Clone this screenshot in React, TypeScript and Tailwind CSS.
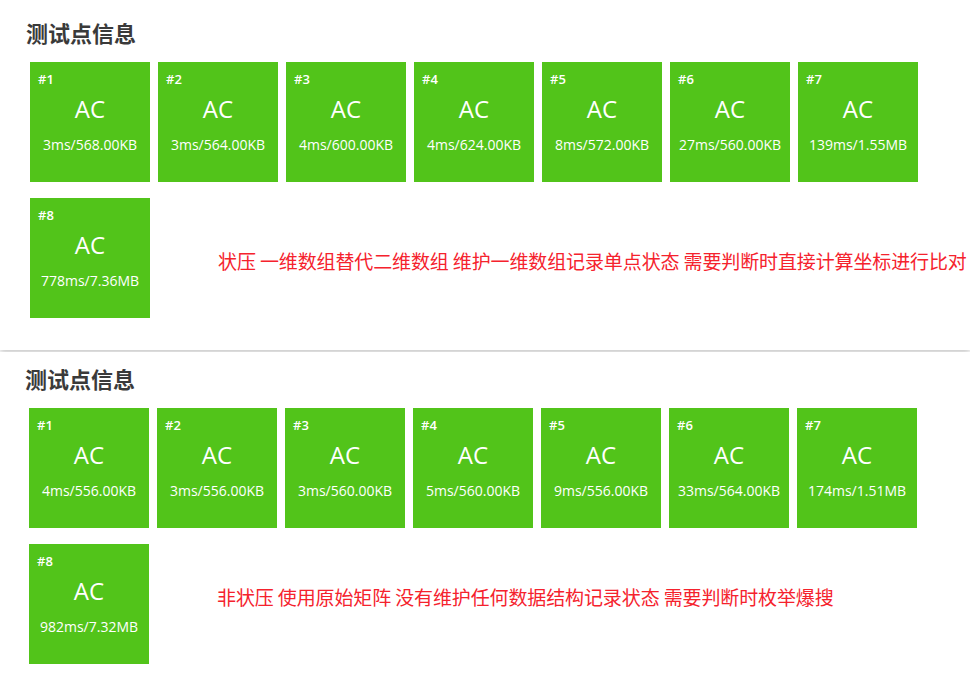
const sections = [
  {
    results: [
      "3ms/568.00KB",
      "3ms/564.00KB",
      "4ms/600.00KB",
      "4ms/624.00KB",
      "8ms/572.00KB",
      "27ms/560.00KB",
      "139ms/1.55MB",
      "778ms/7.36MB",
    ],
    note: "状压 一维数组替代二维数组 维护一维数组记录单点状态 需要判断时直接计算坐标进行比对",
  },
  {
    results: [
      "4ms/556.00KB",
      "3ms/556.00KB",
      "3ms/560.00KB",
      "5ms/560.00KB",
      "9ms/556.00KB",
      "33ms/564.00KB",
      "174ms/1.51MB",
      "982ms/7.32MB",
    ],
    note: "非状压 使用原始矩阵 没有维护任何数据结构记录状态 需要判断时枚举爆搜",
  },
];

function Tile({ id, usage }: { id: number; usage: string }) {
  return (
    <div className="flex h-[120px] w-[120px] shrink-0 flex-col bg-[#52c41a] text-white">
      <div className="ml-2 mt-[9px] text-[13px] font-semibold leading-4">#{id}</div>
      <div className="mt-[6px] text-center text-[24px] leading-8">AC</div>
      <div className="mt-[10px] text-center text-[14px] leading-5">{usage}</div>
    </div>
  );
}

function Section({
  results,
  note,
  top,
  noteShift,
  shadow,
}: {
  results: string[];
  note: string;
  top: string;
  noteShift: string;
  shadow: boolean;
}) {
  const first = results.slice(0, 7);
  const last = results[7];
  return (
    <div className={`bg-white pb-8 ${top} ${shadow ? "shadow-[0_2px_6px_rgba(0,0,0,0.25)]" : ""}`}>
      <h2
        className="pl-[26px] text-[22px] font-bold leading-7 text-[#3a3a3a]"
        style={{ fontFamily: '"Noto Sans CJK SC", sans-serif' }}
      >
        测试点信息
      </h2>
      <div className="mt-4 pl-[30px]">
        <div className="flex gap-2">
          {first.map((u, i) => (
            <Tile key={i} id={i + 1} usage={u} />
          ))}
        </div>
        <div className="mt-4 flex items-center">
          <Tile id={8} usage={last} />
          <p
            className={`ml-[68px] whitespace-nowrap text-[19px] leading-6 tracking-[-0.12px] text-[#f5222d] ${noteShift}`}
            style={{ fontFamily: '"Noto Sans CJK SC", sans-serif' }}
          >
            {note}
          </p>
        </div>
      </div>
    </div>
  );
}

export default function App() {
  return (
    <div
      className="min-h-screen w-[970px] overflow-hidden bg-white"
      style={{ fontFamily: '"Open Sans", "Noto Sans CJK SC", sans-serif' }}
    >
      <Section {...sections[0]} top="pt-[18px]" noteShift="mt-[6px]" shadow />
      <div className="mt-[2px] -ml-px">
        <Section {...sections[1]} top="pt-[12px]" noteShift="-mt-[14px]" shadow={false} />
      </div>
    </div>
  );
}
